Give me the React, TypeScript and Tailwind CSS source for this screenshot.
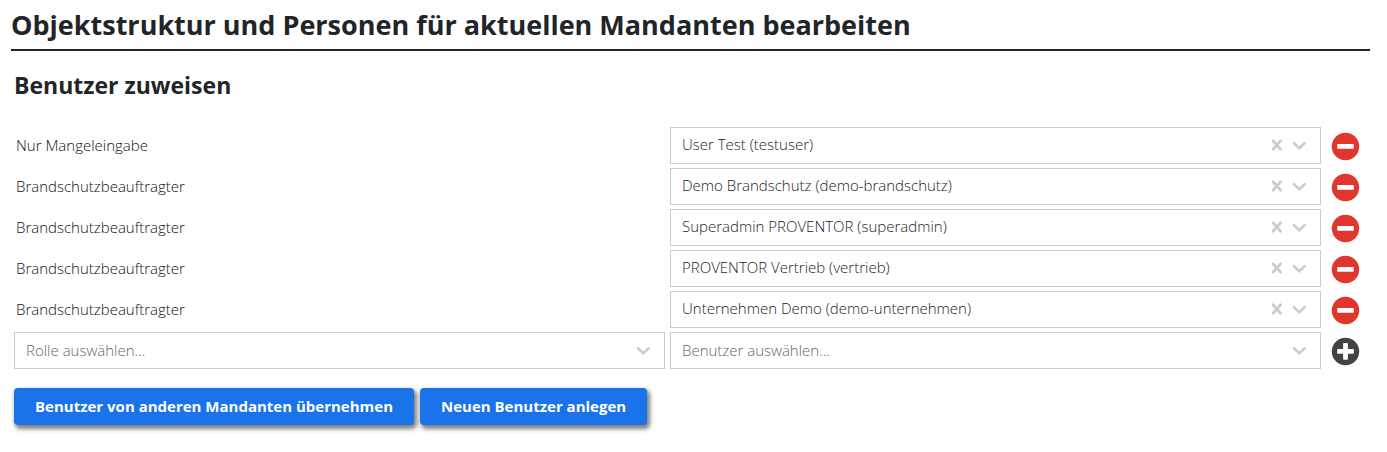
import React, { useState } from 'react';

interface Assignment {
  id: number;
  role: string;
  user: string;
}

const USERS = [
  'User Test (testuser)',
  'Demo Brandschutz (demo-brandschutz)',
  'Superadmin PROVENTOR (superadmin)',
  'PROVENTOR Vertrieb (vertrieb)',
  'Unternehmen Demo (demo-unternehmen)',
];

const ROLES = ['Nur Mangeleingabe', 'Brandschutzbeauftragter'];

const INITIAL: Assignment[] = USERS.map((user, idx) => ({
  id: idx + 1,
  role: idx === 0 ? ROLES[0] : ROLES[1],
  user,
}));

export default function App() {
  const [rows, setRows] = useState<Assignment[]>(INITIAL);
  const [newRole, setNewRole] = useState('');
  const [newUser, setNewUser] = useState('');

  const updateUser = (id: number, user: string) =>
    setRows(rows.map((row) => (row.id === id ? { ...row, user } : row)));

  const removeRow = (id: number) => setRows(rows.filter((row) => row.id !== id));

  const addRow = () => {
    if (!newRole || !newUser) return;
    setRows([...rows, { id: Date.now(), role: newRole, user: newUser }]);
    setNewRole('');
    setNewUser('');
  };

  return (
    <main className="pl-[11px] pr-[17px] pt-1 pb-6 bg-white text-[#212529] font-['Open_Sans',sans-serif] text-[15px] font-light">
      <h1 className="border-b-2 border-[#212529] pb-1 text-[27px] leading-[41px] font-bold">
        Objektstruktur und Personen für aktuellen Mandanten bearbeiten
      </h1>

      <section className="pl-[3px] pr-[5px] pt-[18px]">
        <h2 className="text-[23px] leading-8 font-bold">Benutzer zuweisen</h2>

        <ul className="mt-[26px] flex flex-col gap-1">
          {rows.map((row) => (
            <li key={row.id} className="grid grid-cols-[1fr_1fr_39px] items-center gap-x-[5px]">
              <label htmlFor={`user-${row.id}`} className="pl-[2px] text-[#111111]">{row.role}</label>
              <SelectBox
                id={`user-${row.id}`}
                label={row.role}
                placeholder="Benutzer auswählen..."
                options={USERS}
                value={row.user}
                onChange={(user) => updateUser(row.id, user)}
                clearable
              />
              <ActionButton label="Entfernen" kind="remove" onClick={() => removeRow(row.id)} />
            </li>
          ))}

          {/* New assignment */}
          <li className="grid grid-cols-[1fr_1fr_39px] items-center gap-x-[5px]">
            <SelectBox
              id="new-role"
              label="Rolle"
              placeholder="Rolle auswählen..."
              options={ROLES}
              value={newRole}
              onChange={setNewRole}
            />
            <SelectBox
              id="new-user"
              label="Benutzer"
              placeholder="Benutzer auswählen..."
              options={USERS}
              value={newUser}
              onChange={setNewUser}
            />
            <ActionButton label="Hinzufügen" kind="add" onClick={addRow} />
          </li>
        </ul>

        <div className="mt-[19px] flex flex-wrap gap-[6px]">
          <PrimaryButton>Benutzer von anderen Mandanten übernehmen</PrimaryButton>
          <PrimaryButton>Neuen Benutzer anlegen</PrimaryButton>
        </div>
      </section>
    </main>
  );
}

interface SelectBoxProps {
  id: string;
  label: string;
  placeholder: string;
  options: string[];
  value: string;
  onChange: (value: string) => void;
  clearable?: boolean;
}

const SelectBox: React.FC<SelectBoxProps> = ({ id, label, placeholder, options, value, onChange, clearable }) => (
  <div className="relative">
    <select
      id={id}
      aria-label={label}
      value={value}
      onChange={(e) => onChange(e.target.value)}
      className={`block w-full h-[37px] appearance-none border border-[#cccccc] bg-white pl-[11px] pr-16 outline-none focus:border-[#1a73e8] ${value ? 'pb-[2px] text-[#1c1c1c]' : 'text-[#666666]'}`}
    >
      <option value="" hidden>{placeholder}</option>
      {options.map((option) => (
        <option key={option} value={option}>{option}</option>
      ))}
    </select>
    <div className="pointer-events-none absolute top-0 bottom-[2px] right-[14px] flex items-center gap-2 text-[#cccccc]">
      {clearable && value && (
        <button
          type="button"
          aria-label="Auswahl löschen"
          onClick={() => onChange('')}
          className="pointer-events-auto hover:text-[#999999]"
        >
          <svg width="14" height="14" viewBox="0 0 14 14" fill="none" stroke="currentColor" strokeWidth="2.8" strokeLinecap="round">
            <path d="M3 2.8 L10.6 11.2 M10.6 2.8 L3 11.2" />
          </svg>
        </button>
      )}
      <svg width="15" height="14" viewBox="0 0 15 14" fill="none" stroke="currentColor" strokeWidth="2.6" strokeLinecap="round">
        <path d="M2 5.2 L7.3 10.2 L12.6 5.2" />
      </svg>
    </div>
  </div>
);

const ActionButton: React.FC<{ label: string; kind: 'add' | 'remove'; onClick: () => void }> = ({ label, kind, onClick }) => (
  <button type="button" aria-label={label} onClick={onClick} className="flex items-center justify-center pt-[2px]">
    <svg width="29" height="29" viewBox="0 0 29 29">
      <circle cx="14.5" cy="14.5" r="13.7" fill={kind === 'add' ? '#444242' : '#e0362c'} />
      <rect x="6.2" y="12" width="16.6" height="4.8" rx="0.8" fill="#ffffff" />
      {kind === 'add' && <rect x="12.1" y="6.1" width="4.8" height="16.6" rx="0.8" fill="#ffffff" />}
    </svg>
  </button>
);

const PrimaryButton: React.FC<{ children: React.ReactNode }> = ({ children }) => (
  <button
    type="button"
    className="h-[37px] rounded bg-[#1a73e8] px-[21px] font-bold text-white shadow-[2px_3px_4px_1px_rgba(0,0,0,0.5)] hover:bg-[#1765cc]"
  >
    {children}
  </button>
);
